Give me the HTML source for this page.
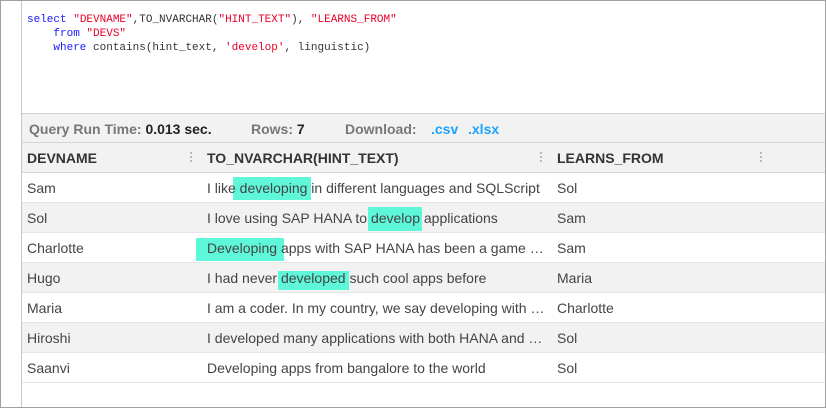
<!DOCTYPE html><html><head><meta charset="utf-8"><style>
*{margin:0;padding:0;box-sizing:border-box}
body{width:826px;height:408px;background:#fff;font-family:"Liberation Sans",Arial,sans-serif;position:relative;overflow:hidden}
.frame{position:absolute;left:0;top:0;width:826px;height:408px;border:1px solid #a0a0a0;border-right:1px solid #a0a0a0}
.gut{position:absolute;left:21px;top:0;width:1px;height:408px;background:#c8c8c8}
.code{position:absolute;left:27px;top:13px;font-family:"Liberation Mono",monospace;font-size:11px;line-height:14px;color:#333;white-space:pre}
.k{color:#1a1aff}.s{color:#e8002a}
.bar{position:absolute;left:22px;top:113px;width:803px;height:30px;background:#f2f2f2;border-top:1px solid #cfcfcf;border-bottom:1px solid #d6d6d6;font-size:14px;font-weight:bold;color:#777;line-height:30px}
.bar span{position:absolute;top:0}
.row{position:absolute;left:22px;width:803px;height:30px;border-bottom:1px solid #e6e6e6;font-size:14px;color:#444;line-height:31px}
.row span{position:absolute;top:0;white-space:nowrap}
.hd{font-weight:bold;color:#333;background:#f2f2f2;border-bottom:1px solid #d6d6d6}
.g{background:#f2f2f2}
.hl{position:absolute;background:#5ef7d9}
.dots{position:absolute;width:2px;top:9px;height:12px;background:repeating-linear-gradient(#bbb 0 2px,transparent 2px 4px)}
</style></head><body>
<div class="gut"></div>
<div class="code"><span class="k">select</span> <span class="s">"DEVNAME"</span>,TO_NVARCHAR(<span class="s">"HINT_TEXT"</span>), <span class="s">"LEARNS_FROM"</span>
    <span class="k">from</span> <span class="s">"DEVS"</span>
    <span class="k">where</span> contains(hint_text, <span class="s">'develop'</span>, linguistic)</div>
<div class="bar"><span style="left:7px">Query Run Time: <b style="color:#222">0.013 sec.</b></span><span style="left:229px">Rows: <b style="color:#222">7</b></span><span style="left:323px">Download:</span><span style="left:409px;color:#1aa3ff">.csv</span><span style="left:446px;color:#1aa3ff">.xlsx</span></div>
<div class="row hd" style="top:143px"><span style="left:5px">DEVNAME</span><div class="dots" style="left:168px"></div><span style="left:185px">TO_NVARCHAR(HINT_TEXT)</span><div class="dots" style="left:518px"></div><span style="left:535px">LEARNS_FROM</span><div class="dots" style="left:738px"></div></div>
<div class="row" style="top:173px"><div class="hl" style="left:211px;top:4px;width:78px;height:23px"></div><span style="left:5px">Sam</span><span style="left:185px">I like developing in different languages and SQLScript</span><span style="left:535px">Sol</span></div>
<div class="row g" style="top:203px"><div class="hl" style="left:346px;top:4px;width:54px;height:24px"></div><span style="left:5px">Sol</span><span style="left:185px">I love using SAP HANA to develop applications</span><span style="left:535px">Sam</span></div>
<div class="row" style="top:233px"><div class="hl" style="left:174px;top:5px;width:88px;height:23px"></div><span style="left:5px">Charlotte</span><span style="left:185px">Developing apps with SAP HANA has been a game …</span><span style="left:535px">Sam</span></div>
<div class="row g" style="top:263px"><div class="hl" style="left:256px;top:8px;width:71px;height:19px"></div><span style="left:5px">Hugo</span><span style="left:185px">I had never developed such cool apps before</span><span style="left:535px">Maria</span></div>
<div class="row" style="top:293px"><span style="left:5px">Maria</span><span style="left:185px">I am a coder. In my country, we say developing with …</span><span style="left:535px">Charlotte</span></div>
<div class="row g" style="top:323px"><span style="left:5px">Hiroshi</span><span style="left:185px">I developed many applications with both HANA and …</span><span style="left:535px">Sol</span></div>
<div class="row" style="top:353px"><span style="left:5px">Saanvi</span><span style="left:185px">Developing apps from bangalore to the world</span><span style="left:535px">Sol</span></div>
<div class="frame"></div>
</body></html>
